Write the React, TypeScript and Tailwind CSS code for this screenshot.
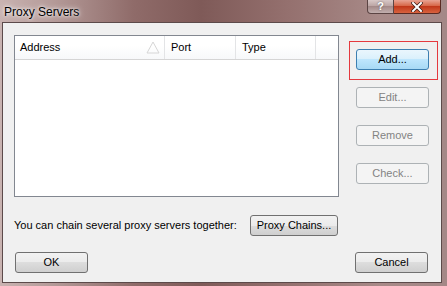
import React from 'react';

type BtnProps = {
  label: string;
  width?: string;
  disabled?: boolean;
  isDefault?: boolean;
};

const Button = ({ label, width = 'w-[73px]', disabled, isDefault }: BtnProps) => {
  let look =
    'border-[#707070] text-black bg-[linear-gradient(to_bottom,#f2f2f2_0%,#ebebeb_50%,#dddddd_50%,#cfcfcf_100%)]';
  if (disabled) look = 'border-[#adb2b5] text-[#838383] bg-[#f4f4f4]';
  if (isDefault)
    look =
      'border-[#3c7fb1] text-black bg-[linear-gradient(to_bottom,#eaf6fd_0%,#d9f0fc_50%,#bee6fd_50%,#a7d9f5_100%)]';

  return (
    <div
      className={`${width} h-[21px] shrink-0 flex items-center justify-center rounded-[3px] border text-[11px] leading-none whitespace-nowrap ${look}`}
    >
      {label}
    </div>
  );
};

const App = () => {
  return (
    <div
      className="w-[447px] h-[286px] flex flex-col bg-[linear-gradient(90deg,#c9b3b1_0%,#b49a98_12%,#8f6b69_30%,#7f5a58_45%,#95716f_65%,#a88a88_85%,#a48887_100%)]"
      style={{ fontFamily: '"Liberation Sans", Arial, sans-serif' }}
    >
      {/* Title bar */}
      <div className="h-[22px] shrink-0 flex items-start justify-between">
        <div className="pl-[4px] pt-[3px] text-[12px] text-black [text-shadow:0_0_6px_#ffffff,0_0_3px_#ffffff]">
          Proxy Servers
        </div>
        <div className="flex mr-[6px]">
          <div className="w-[27px] h-[14px] flex items-center justify-center rounded-bl-[4px] border border-[#5b4443] border-t-0 bg-[linear-gradient(to_bottom,#d8c8c7,#b9a2a1_50%,#a48a89_50%,#c2afae)] text-[11px] font-bold text-white [text-shadow:0_0_2px_#555]">
            ?
          </div>
          <div className="w-[47px] h-[14px] flex items-center justify-center rounded-br-[4px] border border-[#5b2a22] border-l-0 border-t-0 bg-[linear-gradient(to_bottom,#e8a393,#d5603f_50%,#c1381a_50%,#d8633f)]">
            <svg width="12" height="10" viewBox="0 0 12 10">
              <path d="M2 1 L10 9 M10 1 L2 9" stroke="#3c1c15" strokeWidth="3.4" strokeLinecap="square" />
              <path d="M2 1 L10 9 M10 1 L2 9" stroke="#ffffff" strokeWidth="2" strokeLinecap="square" />
            </svg>
          </div>
        </div>
      </div>

      {/* Client area */}
      <div className="ml-[2px] mr-[5px] mb-[3px] flex-1 border border-[#5c4a4a] bg-[#f0f0f0] pl-[11px] pt-[12px]">
        <div className="flex">
          {/* List view */}
          <div className="w-[325px] h-[162px] shrink-0 border border-[#828790] bg-white">
            <div className="h-[24px] flex border-b border-[#d5d5d5] bg-[linear-gradient(to_bottom,#ffffff_0%,#ffffff_40%,#f7f8fa_100%)] text-[11px] text-black">
              <div className="w-[150px] flex items-center justify-between pl-[5px] pr-[4px] border-r border-[#e3e4e6]">
                <span>Address</span>
                <svg width="14" height="13" viewBox="0 0 14 13">
                  <path d="M7 1 L13 12 L1 12 Z" fill="none" stroke="#d6d6d6" strokeWidth="1" />
                </svg>
              </div>
              <div className="w-[71px] flex items-center pl-[6px] border-r border-[#e3e4e6]">Port</div>
              <div className="w-[80px] flex items-center pl-[6px] border-r border-[#e3e4e6]">Type</div>
              <div className="flex-1" />
            </div>
          </div>

          {/* Button column */}
          <div className="ml-[10px] flex flex-col">
            <div className="mt-[6px] w-[89px] h-[39px] shadow-[inset_0_0_0_1px_#e5393e] pl-[7px] pt-[8px]">
              <Button label="Add..." isDefault />
            </div>
            <div className="pl-[7px] pt-[7px] flex flex-col gap-[17px]">
              <Button label="Edit..." disabled />
              <Button label="Remove" disabled />
              <Button label="Check..." disabled />
            </div>
          </div>
        </div>

        {/* Proxy chains row */}
        <div className="mt-[18px] flex items-center">
          <span className="w-[236px] shrink-0 text-[11px] text-black whitespace-nowrap">
            You can chain several proxy servers together:
          </span>
          <Button label="Proxy Chains..." width="w-[88px]" />
        </div>

        {/* OK / Cancel */}
        <div className="mt-[16px] w-[414px] flex justify-between pl-[1px]">
          <Button label="OK" />
          <Button label="Cancel" />
        </div>
      </div>
    </div>
  );
};

export default App;
